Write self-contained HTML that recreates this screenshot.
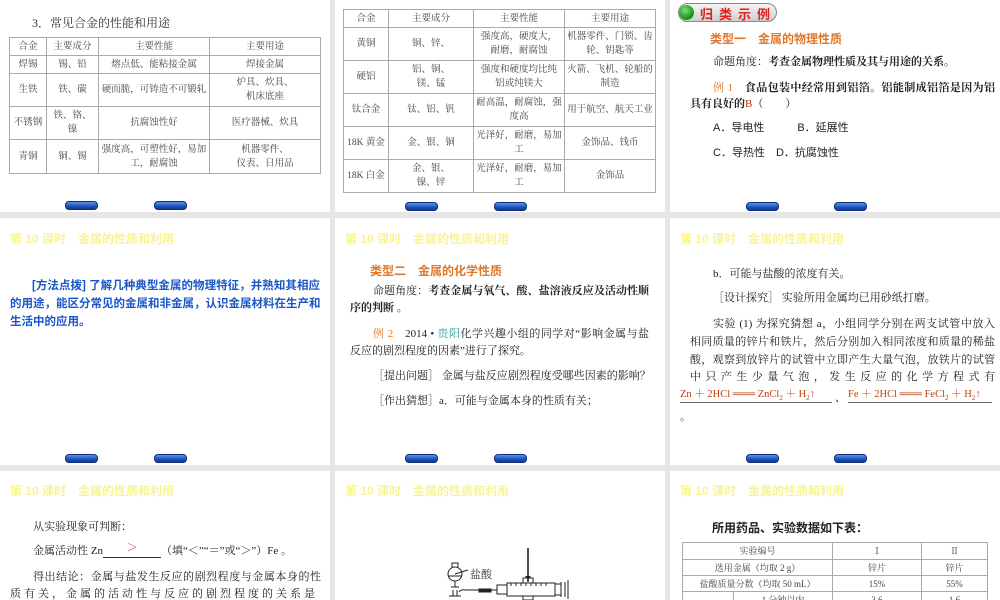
<!DOCTYPE html>
<html><head><meta charset="utf-8"><style>
*{margin:0;padding:0;box-sizing:border-box}
body{width:1000px;height:600px;background:#e6e6e6;position:relative;overflow:hidden;font-family:"Liberation Serif","Noto Serif CJK SC","Noto Sans CJK SC",serif;color:#222}
.p{position:absolute;background:#fff;overflow:hidden}
.a{position:absolute;white-space:nowrap}
.j{position:absolute;white-space:nowrap;text-align:justify;text-align-last:justify}
.hd{position:absolute;left:10px;top:12px;font:bold 12px "Liberation Sans","Noto Sans CJK SC",sans-serif;color:#f8f590;white-space:nowrap}
.btn{position:absolute;width:33px;height:9px;border-radius:4px;background:linear-gradient(#5a96f0,#1f4fb8 60%,#123a90);border:1px solid #0d2f78}
table{position:absolute;border-collapse:collapse;font-size:9.5px;color:#444;table-layout:fixed}
td{border:1px solid #aaa;text-align:center;vertical-align:middle;line-height:14px;padding:0;white-space:nowrap;overflow:hidden}
.t{font-size:11px;line-height:18px}
.or{color:#e0782a}
.b{font-family:"Liberation Sans","Noto Sans CJK SC",sans-serif;font-weight:bold}
</style></head><body>

<!-- Panel A -->
<div class="p" style="left:0;top:0;width:330px;height:212px">
<div class="a" style="left:32px;top:14px;font-size:12px;color:#333">3．常见合金的性能和用途</div>
<table style="left:9px;top:37px;width:312px">
<col style="width:37px"><col style="width:52px"><col style="width:111px"><col>
<tr style="height:18px"><td>合金</td><td>主要成分</td><td>主要性能</td><td>主要用途</td></tr>
<tr style="height:18px"><td>焊锡</td><td>锡、铅</td><td>熔点低、能粘接金属</td><td>焊接金属</td></tr>
<tr style="height:33px"><td>生铁</td><td>铁、碳</td><td>硬而脆，可铸造不可锻轧</td><td>炉具、炊具、<br>机床底座</td></tr>
<tr style="height:33px"><td>不锈钢</td><td>铁、铬、<br>镍</td><td>抗腐蚀性好</td><td>医疗器械、炊具</td></tr>
<tr style="height:34px"><td>青铜</td><td>铜、锡</td><td>强度高，可塑性好，易加<br>工，耐腐蚀</td><td>机器零件、<br>仪表、日用品</td></tr>
</table>
<div class="btn" style="left:65px;top:201px"></div><div class="btn" style="left:154px;top:201px"></div>
</div>

<!-- Panel B -->
<div class="p" style="left:335px;top:0;width:330px;height:212px">
<table style="left:8px;top:9px;width:313px">
<col style="width:45px"><col style="width:85px"><col style="width:91px"><col>
<tr style="height:18px"><td>合金</td><td>主要成分</td><td>主要性能</td><td>主要用途</td></tr>
<tr style="height:33px"><td>黄铜</td><td>铜、锌、</td><td>强度高，硬度大，<br>耐磨，耐腐蚀</td><td>机器零件、门锁、齿<br>轮、钥匙等</td></tr>
<tr style="height:33px"><td>硬铝</td><td>铝、铜、<br>镁、锰</td><td>强度和硬度均比纯<br>铝或纯镁大</td><td>火箭、飞机、轮船的<br>制造</td></tr>
<tr style="height:33px"><td>钛合金</td><td>钛、铝、钒</td><td>耐高温，耐腐蚀，强<br>度高</td><td>用于航空、航天工业</td></tr>
<tr style="height:33px"><td>18K 黄金</td><td>金、银、铜</td><td>光泽好，耐磨，易加<br>工</td><td>金饰品、钱币</td></tr>
<tr style="height:33px"><td>18K 白金</td><td>金、银、<br>镍、锌</td><td>光泽好，耐磨，易加<br>工</td><td>金饰品</td></tr>
</table>
<div class="btn" style="left:70px;top:202px"></div><div class="btn" style="left:159px;top:202px"></div>
</div>

<!-- Panel C -->
<div class="p" style="left:670px;top:0;width:330px;height:212px">
<div class="a" style="left:8px;top:3px;width:99px;height:19px;border-radius:10px;background:linear-gradient(#f4f4f4,#cfcfcf);border:1px solid #888"></div>
<div class="a" style="left:9px;top:5px;width:15px;height:15px;border-radius:50%;background:radial-gradient(circle at 40% 35%,#7de07d,#1c9a1c 60%,#0d6b0d)"></div>
<div class="a b" style="left:30px;top:4px;font-size:13px;color:#e02020;letter-spacing:6px">归类示例</div>
<div class="a b or" style="left:40px;top:30px;font-size:12px">类型一　金属的物理性质</div>
<div class="a t" style="left:43px;top:53px">命题角度：<b>考查金属物理性质及其与用途的关系。</b></div>
<div class="j t" style="left:43px;top:79px;width:282px"><span class="or">例 1</span>　<b>食品包装中经常用到铝箔。铝能制成铝箔是因为铝</b></div>
<div class="a t" style="left:20px;top:95px"><b>具有良好的</b><span style="color:#c03010">B</span>（　　）</div>
<div class="a t b" style="left:43px;top:119px;font-weight:normal">A．导电性　　　B．延展性</div>
<div class="a t b" style="left:43px;top:144px;font-weight:normal">C．导热性　D．抗腐蚀性</div>
<div class="btn" style="left:76px;top:202px"></div><div class="btn" style="left:164px;top:202px"></div>
</div>

<!-- Panel D -->
<div class="p" style="left:0;top:218px;width:330px;height:247px">
<div class="hd">第 10 课时　金属的性质和利用</div>
<div class="j b" style="left:32px;top:59px;width:288px;font-size:11.5px;line-height:18px;color:#1a56c8">[方法点拨] 了解几种典型金属的物理特征，并熟知其相应</div>
<div class="j b" style="left:10px;top:77px;width:310px;font-size:11.5px;line-height:18px;color:#1a56c8">的用途，能区分常见的金属和非金属，认识金属材料在生产和</div>
<div class="a b" style="left:10px;top:95px;font-size:11.5px;line-height:18px;color:#1a56c8">生活中的应用。</div>
<div class="btn" style="left:65px;top:236px"></div><div class="btn" style="left:154px;top:236px"></div>
</div>

<!-- Panel E -->
<div class="p" style="left:335px;top:218px;width:330px;height:247px">
<div class="hd">第 10 课时　金属的性质和利用</div>
<div class="a b or" style="left:35px;top:44px;font-size:12px">类型二　金属的化学性质</div>
<div class="j t" style="left:38px;top:64px;width:276px">命题角度：<b>考查金属与氧气、酸、盐溶液反应及活动性顺</b></div>
<div class="a t" style="left:15px;top:81px"><b>序的判断 。</b></div>
<div class="j t" style="left:38px;top:107px;width:276px"><span class="or">例 2</span>　2014 • <span style="color:#2a9a9a">贵阳</span>化学兴趣小组的同学对“影响金属与盐</div>
<div class="a t" style="left:15px;top:124px">反应的剧烈程度的因素”进行了探究。</div>
<div class="a t" style="left:38px;top:149px">［提出问题］ 金属与盐反应剧烈程度受哪些因素的影响？</div>
<div class="a t" style="left:38px;top:174px">［作出猜想］a．可能与金属本身的性质有关；</div>
<div class="btn" style="left:70px;top:236px"></div><div class="btn" style="left:159px;top:236px"></div>
</div>

<!-- Panel F -->
<div class="p" style="left:670px;top:218px;width:330px;height:247px">
<div class="hd">第 10 课时　金属的性质和利用</div>
<div class="a t" style="left:43px;top:47px">b．可能与盐酸的浓度有关。</div>
<div class="a t" style="left:43px;top:71px">［设计探究］ 实验所用金属均已用砂纸打磨。</div>
<div class="j t" style="left:43px;top:97px;width:282px">实验 (1) 为探究猜想 a，小组同学分别在两支试管中放入</div>
<div class="j t" style="left:20px;top:115px;width:305px">相同质量的锌片和铁片，然后分别加入相同浓度和质量的稀盐</div>
<div class="j t" style="left:20px;top:133px;width:305px">酸，观察到放锌片的试管中立即产生大量气泡，放铁片的试管</div>
<div class="j t" style="left:20px;top:150px;width:305px">中只产生少量气泡，发生反应的化学方程式有</div>
<div class="a" style="left:10px;top:168px;font-size:10.5px;color:#c04010;border-bottom:1px solid #666;width:152px">Zn ＋ 2HCl ═══ ZnCl<sub style="font-size:7px">2</sub> ＋ H<sub style="font-size:7px">2</sub>↑</div>
<div class="a" style="left:165px;top:171px;font-size:11px">、</div>
<div class="a" style="left:178px;top:168px;font-size:10.5px;color:#c04010;border-bottom:1px solid #666;width:144px">Fe ＋ 2HCl ═══ FeCl<sub style="font-size:7px">2</sub> ＋ H<sub style="font-size:7px">2</sub>↑</div>
<div class="a" style="left:10px;top:190px;font-size:11px">。</div>
<div class="btn" style="left:76px;top:236px"></div><div class="btn" style="left:164px;top:236px"></div>
</div>

<!-- Panel G -->
<div class="p" style="left:0;top:471px;width:330px;height:129px">
<div class="hd" style="top:11px">第 10 课时　金属的性质和利用</div>
<div class="a t" style="left:33px;top:47px">从实验现象可判断：</div>
<div class="a t" style="left:33px;top:71px">金属活动性 Zn<span style="display:inline-block;width:58px;border-bottom:1px solid #333;text-align:center;color:#d03020;position:relative;top:-3px">＞</span>（填“＜”“＝”或“＞”）Fe 。</div>
<div class="j t" style="left:33px;top:97px;width:288px">得出结论：金属与盐发生反应的剧烈程度与金属本身的性</div>
<div class="j t" style="left:10px;top:114px;width:305px">质有关，金属的活动性与反应的剧烈程度的关系是</div>
</div>

<!-- Panel H -->
<div class="p" style="left:335px;top:471px;width:330px;height:129px">
<div class="hd" style="top:11px">第 10 课时　金属的性质和利用</div>
<div class="a" style="left:135px;top:95px;font-size:11px;color:#333">盐酸</div>
<svg class="a" style="left:100px;top:75px" width="160" height="54" viewBox="0 0 160 54">
<g fill="none" stroke="#222" stroke-width="1">
<line x1="93" y1="2" x2="93" y2="36" stroke-width="1.6"/>
<path d="M20 28 L33 24"/>
<circle cx="20" cy="28" r="7"/><path d="M13 30 h14"/>
<path d="M17 21 v-4 h6 v4"/>
<path d="M20 35 v6 M16 41 h8 M18 44 v6 M22 44 v6 M14 50 h12"/>
<path d="M24 46 Q26 43 30 44 H62"/>
<rect x="44" y="43" width="12" height="3" fill="#222"/>
<rect x="62" y="39" width="10" height="9"/>
<rect x="72" y="37" width="48" height="13"/>
<path d="M76 37 v3 M81 37 v3 M86 37 v3 M91 37 v3 M96 37 v3 M101 37 v3 M106 37 v3 M111 37 v3"/>
<rect x="88" y="32" width="10" height="5"/>
<rect x="88" y="50" width="10" height="4"/>
<path d="M120 38 h6 v11 h-6 M126 36 v15 M130 36 v15 M133 34 v19"/>
</g>
<path d="M90 30 l3 4 l3 -4z" fill="#222"/>
</svg>
</div>

<!-- Panel I -->
<div class="p" style="left:670px;top:471px;width:330px;height:129px">
<div class="hd" style="top:11px">第 10 课时　金属的性质和利用</div>
<div class="a b" style="left:42px;top:48px;font-size:12px">所用药品、实验数据如下表：</div>
<table style="left:12px;top:71px;width:306px;font-size:9px">
<col style="width:51px"><col style="width:99px"><col style="width:89px"><col>
<tr style="height:17px"><td colspan="2">实验编号</td><td>Ⅰ</td><td>Ⅱ</td></tr>
<tr style="height:16px"><td colspan="2">选用金属（均取 2 g）</td><td>锌片</td><td>锌片</td></tr>
<tr style="height:16px"><td colspan="2">盐酸质量分数（均取 50 mL）</td><td>15%</td><td>55%</td></tr>
<tr style="height:16px"><td></td><td>1 分钟以内</td><td>3.6</td><td>1.6</td></tr>
</table>
</div>

</body></html>
